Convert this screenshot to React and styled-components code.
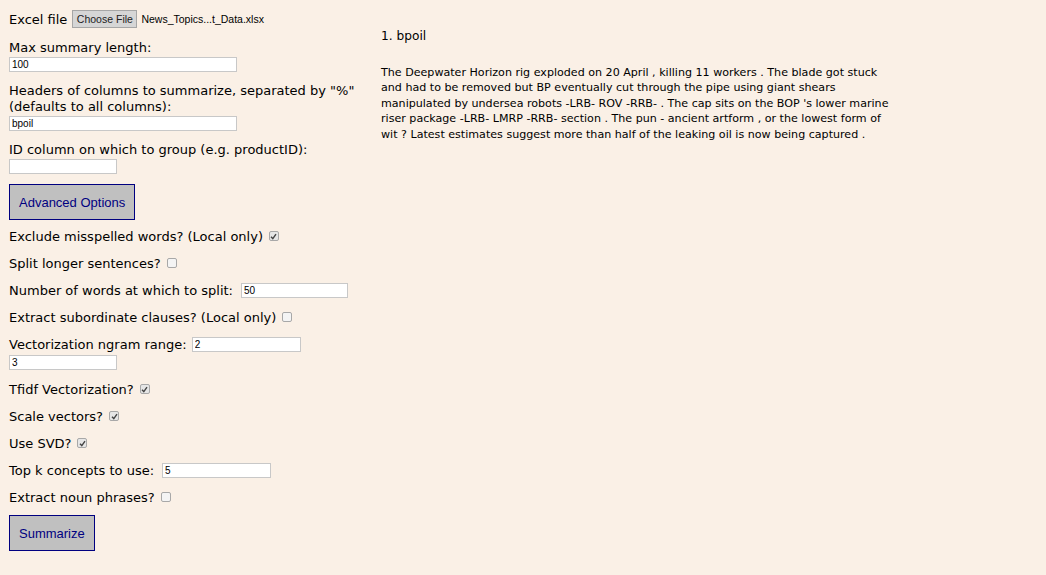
import React from "react";
import styled, { createGlobalStyle } from "styled-components";

const GlobalStyle = createGlobalStyle`
  html, body {
    background-color: #faf0e6;
  }
  body {
    margin: 8px;
    font-family: "DejaVu Sans", Verdana, sans-serif;
    font-size: 13px;
    color: #000;
  }
`;

const Page = styled.div`
  display: flex;
  align-items: flex-start;
`;

const Form = styled.form`
  width: 362px;
  flex-shrink: 0;
  padding-left: 1px;
`;

const Results = styled.div`
  width: 620px;
  padding-left: 10px;
  padding-top: 21px;
  font-size: 11.1px;
  line-height: 15.5px;
`;

const ResultTitle = styled.p`
  margin: 0 0 20px;
  font-size: 12.2px;
`;

const ResultText = styled.p`
  margin: 0;
`;

const Field = styled.div`
  margin-top: ${(p) => p.top || 0}px;
  line-height: 16px;
`;

const Row = styled.div`
  display: flex;
  align-items: center;
  height: 16px;
  margin-top: ${(p) => p.top || 11}px;
  gap: ${(p) => p.gap || 5}px;
`;

const TextBox = styled.input`
  display: block;
  box-sizing: border-box;
  width: ${(p) => p.w || 228}px;
  height: 15px;
  margin: ${(p) => (p.inline ? 0 : `${p.mt || 1}px 0 0`)};
  padding: 0 2px;
  border: 1px solid #c8c8c8;
  background: #fff;
  font-family: "Liberation Sans", Arial, sans-serif;
  font-size: 10px;
  color: #000;
  outline: none;
`;

const FileRow = styled.div`
  display: flex;
  align-items: center;
  gap: 5px;
  margin-top: 2px;
`;

const FileButton = styled.span`
  display: inline-flex;
  align-items: center;
  justify-content: center;
  box-sizing: border-box;
  width: 65px;
  height: 18px;
  background: #d6d6d6;
  border: 1px solid #a6a6a6;
  font-family: "Liberation Sans", Arial, sans-serif;
  font-size: 10.5px;
  color: #222;
`;

const FileName = styled.span`
  font-family: "Liberation Sans", Arial, sans-serif;
  font-size: 10.5px;
  margin-left: -1px;
`;

const Button = styled.button`
  display: block;
  box-sizing: border-box;
  height: 36px;
  padding: 0 9px;
  margin-top: ${(p) => p.top || 0}px;
  background: #c0c0c0;
  border: 1px solid #000080;
  color: #000080;
  font-family: "Liberation Sans", Arial, sans-serif;
  font-size: 13px;
`;

const Check = styled.span`
  display: inline-flex;
  align-items: center;
  justify-content: center;
  box-sizing: border-box;
  width: 10px;
  height: 10px;
  border: 1px solid #a8a8a8;
  border-radius: 2px;
  background: ${(p) => (p.checked ? "#e6e6e6" : "#f4f4f4")};
  margin-left: 1px;
`;

function CheckBox({ checked }) {
  return (
    <Check checked={checked}>
      {checked && (
        <svg width="7" height="7" viewBox="0 0 7 7">
          <path d="M1 3.8 L2.8 5.6 L6 1.2" fill="none" stroke="#444" strokeWidth="1.4" />
        </svg>
      )}
    </Check>
  );
}

export default function App() {
  return (
    <>
      <GlobalStyle />
      <Page>
        <Form onSubmit={(e) => e.preventDefault()}>
          <FileRow>
            <span>Excel file</span>
            <FileButton>Choose File</FileButton>
            <FileName>News_Topics...t_Data.xlsx</FileName>
          </FileRow>
          <Field top={12}>
            Max summary length:
            <TextBox defaultValue="100" />
          </Field>
          <Field top={11}>
            Headers of columns to summarize, separated by "%"
            <br />
            (defaults to all columns):
            <TextBox defaultValue="bpoil" />
          </Field>
          <Field top={11}>
            ID column on which to group (e.g. productID):
            <TextBox w={108} defaultValue="" />
          </Field>
          <Button type="button" top={10}>Advanced Options</Button>
          <Row top={8}>
            Exclude misspelled words? (Local only) <CheckBox checked />
          </Row>
          <Row>
            Split longer sentences? <CheckBox />
          </Row>
          <Row gap={8}>
            Number of words at which to split: <TextBox inline w={107} defaultValue="50" />
          </Row>
          <Row>
            Extract subordinate clauses? (Local only) <CheckBox />
          </Row>
          <Row>
            Vectorization ngram range: <TextBox inline w={109} defaultValue="2" />
          </Row>
          <TextBox w={108} mt={3} defaultValue="3" />
          <Row top={11}>
            Tfidf Vectorization? <CheckBox checked />
          </Row>
          <Row>
            Scale vectors? <CheckBox checked />
          </Row>
          <Row>
            Use SVD? <CheckBox checked />
          </Row>
          <Row gap={8}>
            Top k concepts to use: <TextBox inline w={109} defaultValue="5" />
          </Row>
          <Row>
            Extract noun phrases? <CheckBox />
          </Row>
          <Button type="submit" top={10}>Summarize</Button>
        </Form>
        <Results>
          <ResultTitle>1. bpoil</ResultTitle>
          <ResultText>
            The Deepwater Horizon rig exploded on 20 April , killing 11 workers . The blade got stuck
            <br />
            and had to be removed but BP eventually cut through the pipe using giant shears
            <br />
            manipulated by undersea robots -LRB- ROV -RRB- . The cap sits on the BOP 's lower marine
            <br />
            riser package -LRB- LMRP -RRB- section . The pun - ancient artform , or the lowest form of
            <br />
            wit ? Latest estimates suggest more than half of the leaking oil is now being captured .
          </ResultText>
        </Results>
      </Page>
    </>
  );
}
